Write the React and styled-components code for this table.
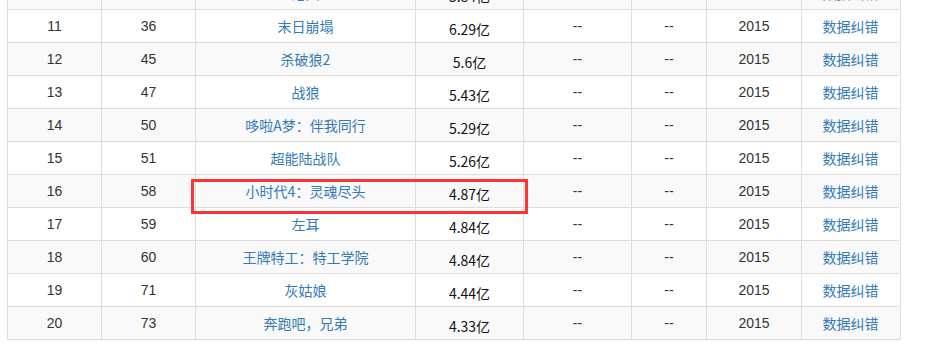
import React from "react";
import styled, { createGlobalStyle } from "styled-components";

const GlobalStyle = createGlobalStyle`
  html, body {
    margin: 0;
    padding: 0;
    background: #fff;
    overflow: hidden;
  }
  body {
    font-family: "Liberation Sans", "Noto Sans CJK SC", sans-serif;
    font-size: 14px;
    color: #333;
  }
`;

const Page = styled.div`
  padding-left: 7px;
  margin-top: -24px;
`;

const Table = styled.div`
  width: 894px;
  border-right: 1px solid #ddd;
  border-bottom: 1px solid #ddd;
  box-sizing: border-box;
`;

const Row = styled.div`
  position: relative;
  display: grid;
  grid-template-columns: 94px 94px 220px 108px 108px 75px 95px 98px;
  background: ${(p) => (p.$striped ? "#f9f9f9" : "#fff")};
`;

const Cell = styled.div`
  box-sizing: border-box;
  height: 33px;
  border-left: 1px solid #ddd;
  border-top: 1px solid #ddd;
  padding: 6px 4px;
  line-height: 20px;
  text-align: center;
  white-space: nowrap;
`;

const BoxOffice = styled(Cell)`
  padding-top: 9px;
  padding-bottom: 3px;
  font-family: "Noto Sans CJK SC", "Liberation Sans", sans-serif;
  color: #111;
`;

const Link = styled.a`
  color: #337ab7;
  text-decoration: none;
  font-family: "Noto Sans CJK SC", sans-serif;
  cursor: pointer;
`;

/* annotation frame drawn over the row it marks */
const Highlight = styled.div`
  position: absolute;
  z-index: 2;
  left: 184px;
  top: 5px;
  width: 337px;
  height: 35px;
  box-sizing: border-box;
  border: 3px solid #f33;
  pointer-events: none;
`;

const rows = [
  [10, 32, "港囧", "5.84亿"],
  [11, 36, "末日崩塌", "6.29亿"],
  [12, 45, "杀破狼2", "5.6亿"],
  [13, 47, "战狼", "5.43亿"],
  [14, 50, "哆啦A梦：伴我同行", "5.29亿"],
  [15, 51, "超能陆战队", "5.26亿"],
  [16, 58, "小时代4：灵魂尽头", "4.87亿"],
  [17, 59, "左耳", "4.84亿"],
  [18, 60, "王牌特工：特工学院", "4.84亿"],
  [19, 71, "灰姑娘", "4.44亿"],
  [20, 73, "奔跑吧，兄弟", "4.33亿"],
];

export default function App() {
  return (
    <>
      <GlobalStyle />
      <Page>
        <Table>
          {rows.map(([rank, total, title, money]) => (
            <Row key={rank} $striped={rank % 2 === 0}>
              <Cell>{rank}</Cell>
              <Cell>{total}</Cell>
              <Cell>
                <Link>{title}</Link>
              </Cell>
              <BoxOffice>{money}</BoxOffice>
              <Cell>--</Cell>
              <Cell>--</Cell>
              <Cell>2015</Cell>
              <Cell>
                <Link>数据纠错</Link>
              </Cell>
              {rank === 16 && <Highlight />}
            </Row>
          ))}
        </Table>
      </Page>
    </>
  );
}
